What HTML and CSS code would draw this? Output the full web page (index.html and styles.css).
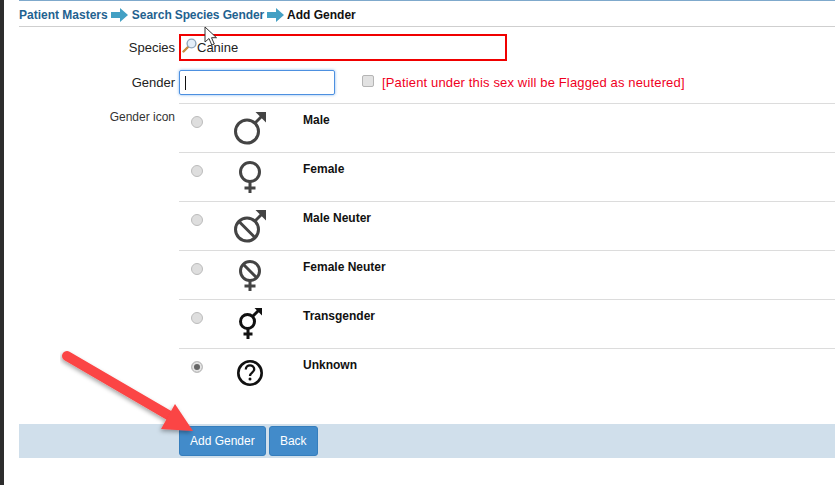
FILE: index.html
```html
<!DOCTYPE html>
<html lang="en">
<head>
    <meta charset="UTF-8">
    <title>Add Gender</title>
    <link rel="stylesheet" href="styles.css">
</head>
<body>
<div class="page">
    <div class="breadcrumb">
        <a>Patient Masters</a>
        <svg class="crumb-arrow" width="17" height="14" viewBox="0 0 17 14"><path d="M0 4h9V0l8 7-8 7v-4H0z" fill="#43a0c4"/></svg>
        <a class="crumb-search">Search</a>
        <a class="crumb-species">Species Gender</a>
        <svg class="crumb-arrow" width="17" height="14" viewBox="0 0 17 14"><path d="M0 4h9V0l8 7-8 7v-4H0z" fill="#43a0c4"/></svg>
        <span>Add Gender</span>
    </div>

    <!-- Species and gender fields -->
    <div class="form-row species-row">
        <label class="form-label">Species</label>
        <div class="species-input">
            <svg class="lookup-icon" width="15" height="15" viewBox="0 0 15 15">
                <path d="M6 9 1.500 13.500" stroke="#c98b3c" stroke-width="2.400" stroke-linecap="round"/>
                <circle cx="9.500" cy="5.500" r="4.400" fill="#e3eef8" stroke="#8fa6bb" stroke-width="1.400"/>
            </svg>
            <span>Canine</span>
        </div>
    </div>
    <div class="form-row gender-row">
        <label class="form-label">Gender</label>
        <div class="gender-input"><i class="caret"></i></div>
        <span class="fake-check"></span>
        <span class="neuter-note">[Patient under this sex will be Flagged as neutered]</span>
    </div>

    <!-- Gender icon list -->
    <div class="icon-section">
        <div class="form-label icon-label">Gender icon</div>
        <div class="icon-list">
            <div class="icon-row">
                <span class="radio"></span>
                <div class="icon-cell">
                    <svg width="36" height="36" viewBox="0 0 36 36" fill="none" stroke="#444" stroke-width="3">
                        <circle cx="15" cy="21.500" r="11.500"/>
                        <path d="M23 13 31 5"/>
                        <path d="M23.500 2h10.500v10.500z" fill="#444" stroke="none"/>
                    </svg>
                </div>
                <b class="icon-name">Male</b>
            </div>
            <div class="icon-row">
                <span class="radio"></span>
                <div class="icon-cell">
                    <svg width="36" height="36" viewBox="0 0 36 36" fill="none" stroke="#444" stroke-width="3">
                        <circle cx="18" cy="13" r="9.500"/>
                        <path d="M18 22v12M12.500 29h11"/>
                    </svg>
                </div>
                <b class="icon-name">Female</b>
            </div>
            <div class="icon-row">
                <span class="radio"></span>
                <div class="icon-cell">
                    <svg width="36" height="36" viewBox="0 0 36 36" fill="none" stroke="#444" stroke-width="3">
                        <circle cx="15" cy="21.500" r="11.500"/>
                        <path d="M7 13.500 23 29.500M23 13 31 5"/>
                        <path d="M23.500 2h10.500v10.500z" fill="#444" stroke="none"/>
                    </svg>
                </div>
                <b class="icon-name">Male Neuter</b>
            </div>
            <div class="icon-row">
                <span class="radio"></span>
                <div class="icon-cell">
                    <svg width="36" height="36" viewBox="0 0 36 36" fill="none" stroke="#444" stroke-width="3">
                        <circle cx="18" cy="14" r="9.500"/>
                        <path d="M18 23v11M12.500 29h11M11.500 7.500 24.500 20.500"/>
                    </svg>
                </div>
                <b class="icon-name">Female Neuter</b>
            </div>
            <div class="icon-row">
                <span class="radio"></span>
                <div class="icon-cell">
                    <svg width="36" height="36" viewBox="0 0 36 36" fill="none" stroke="#111" stroke-width="3">
                        <circle cx="15.500" cy="15.500" r="7"/>
                        <path d="M16 22v11M11.500 28h9M21 10 27 4" />
                        <path d="M22.500 2h7.500v7.500z" fill="#111" stroke="none"/>
                    </svg>
                </div>
                <b class="icon-name">Transgender</b>
            </div>
            <div class="icon-row">
                <span class="radio checked"></span>
                <div class="icon-cell">
                    <svg width="36" height="36" viewBox="0 0 36 36" fill="none" stroke="#111" stroke-width="2.600">
                        <circle cx="18" cy="18" r="11.700"/>
                        <path d="M13.800 14.500c0-5.500 8.400-5.500 8.400-.3 0 3.500-4.200 3.300-4.200 6.800" stroke-width="2.300"/>
                        <circle cx="18" cy="24" r="1.500" fill="#111" stroke="none"/>
                    </svg>
                </div>
                <b class="icon-name">Unknown</b>
            </div>
        </div>
    </div>

    <div class="button-bar">
        <button class="btn">Add Gender</button>
        <button class="btn">Back</button>
    </div>
</div>

<!-- Things drawn on top of the screenshot -->
<svg class="mouse-pointer" width="14" height="21" viewBox="0 0 14 21">
    <path d="M1 1v15l4-3.500 2.800 6.500 2.500-1-2.800-6.300h5z" fill="#fff" stroke="#333" stroke-width="1"/>
</svg>
<svg class="red-arrow" width="140" height="110" viewBox="0 0 140 110">
    <defs>
        <filter id="arrow-shadow" x="-10%" y="-10%" width="120%" height="130%">
            <feDropShadow dx="-1" dy="2" stdDeviation="2" flood-color="#000" flood-opacity=".35"/>
        </filter>
    </defs>
    <g filter="url(#arrow-shadow)">
        <path d="M7 6 110 66" stroke="#fb4444" stroke-width="10" stroke-linecap="round"/>
        <path d="M115 54 133 81 101 79z" fill="#fb4444"/>
    </g>
</svg>
</body>
</html>
```

FILE: styles.css
```css
html, body {
    height: 100%;
}

body {
    margin: 0;
    background-color: white;
    font-family: 'Liberation Sans', Arial, sans-serif;
    font-size: 12px;
    color: #222;
    overflow: hidden;
}

.page {
    box-sizing: border-box;
    height: 485px;
    border-left: 4px solid #2d2d2d;
    padding-left: 15px;
}

.breadcrumb {
    box-sizing: border-box;
    height: 27px;
    display: flex;
    align-items: center;
    gap: 3px;
    padding-top: 2px;
    border-top: 1px solid #7fa9cc;
    border-bottom: 1px solid #cfcfcf;
    font-weight: bold;
    color: #111;
}

.breadcrumb a {
    color: #1f6290;
}

.crumb-search {
    margin-left: 1px;
}

.crumb-species {
    letter-spacing: -0.1px;
}

.crumb-arrow {
    flex: none;
}

.form-row {
    display: flex;
    align-items: center;
}

.form-label {
    width: 160px;
    padding-right: 4px;
    box-sizing: border-box;
    text-align: right;
}

.species-row {
    margin-top: 7px;
    font-size: 13px;
}

.species-input {
    box-sizing: border-box;
    width: 328px;
    height: 27px;
    border: 2px solid #f00000;
    display: flex;
    align-items: center;
    color: #222;
}

.lookup-icon {
    margin-top: -5px;
    margin-left: 1px;
}

.gender-row {
    margin-top: 9px;
    font-size: 13px;
}

.gender-input {
    box-sizing: border-box;
    width: 156px;
    height: 25px;
    border: 1px solid #4d90e0;
    border-radius: 2px;
    box-shadow: 0 0 3px rgba(80, 150, 230, 0.7);
    display: flex;
    align-items: center;
    padding-left: 5px;
}

.caret {
    width: 1px;
    height: 14px;
    background-color: #111;
}

.fake-check {
    box-sizing: border-box;
    width: 12px;
    height: 12px;
    margin: -4px 9px 0 27px;
    background-color: #e2e2e2;
    border: 1px solid #b5b5b5;
    border-radius: 2px;
}

.neuter-note {
    margin-left: -1px;
    color: #f0001e;
    font-size: 13px;
    letter-spacing: 0.15px;
}

.icon-section {
    display: flex;
    margin-top: 8px;
}

.icon-label {
    padding-top: 7px;
    color: #333;
}

.icon-list {
    flex: 1;
}

.icon-row {
    box-sizing: border-box;
    height: 49px;
    border-top: 1px solid #dcdcdc;
    display: flex;
    align-items: flex-start;
}

.radio {
    box-sizing: border-box;
    width: 12px;
    height: 12px;
    margin: 12px 0 0 12px;
    border-radius: 50%;
    background-color: #dedede;
    border: 1px solid #bcbcbc;
    flex: none;
}

.radio.checked {
    background-color: #e4e4e4;
    box-shadow: inset 0 0 0 2px #e4e4e4, inset 0 0 0 5px #666;
}

.icon-cell {
    width: 36px;
    height: 36px;
    margin: 6px 0 0 29px;
    flex: none;
}

.icon-cell svg {
    display: block;
}

.icon-name {
    margin: 9px 0 0 35px;
    color: #111;
}

.button-bar {
    box-sizing: border-box;
    height: 34px;
    margin-top: 27px;
    background-color: #d0dfeb;
    padding: 2px 0 0 160px;
    display: flex;
    align-items: flex-start;
    gap: 3px;
}

.btn {
    height: 30px;
    min-width: 49px;
    padding: 0 10px;
    background-color: #428bca;
    border: 1px solid #357ebd;
    border-radius: 3px;
    color: white;
    font-family: 'Liberation Sans', Arial, sans-serif;
    font-size: 12px;
}

.mouse-pointer {
    position: absolute;
    left: 204px;
    top: 26px;
}

.red-arrow {
    position: absolute;
    left: 60px;
    top: 350px;
}
```
